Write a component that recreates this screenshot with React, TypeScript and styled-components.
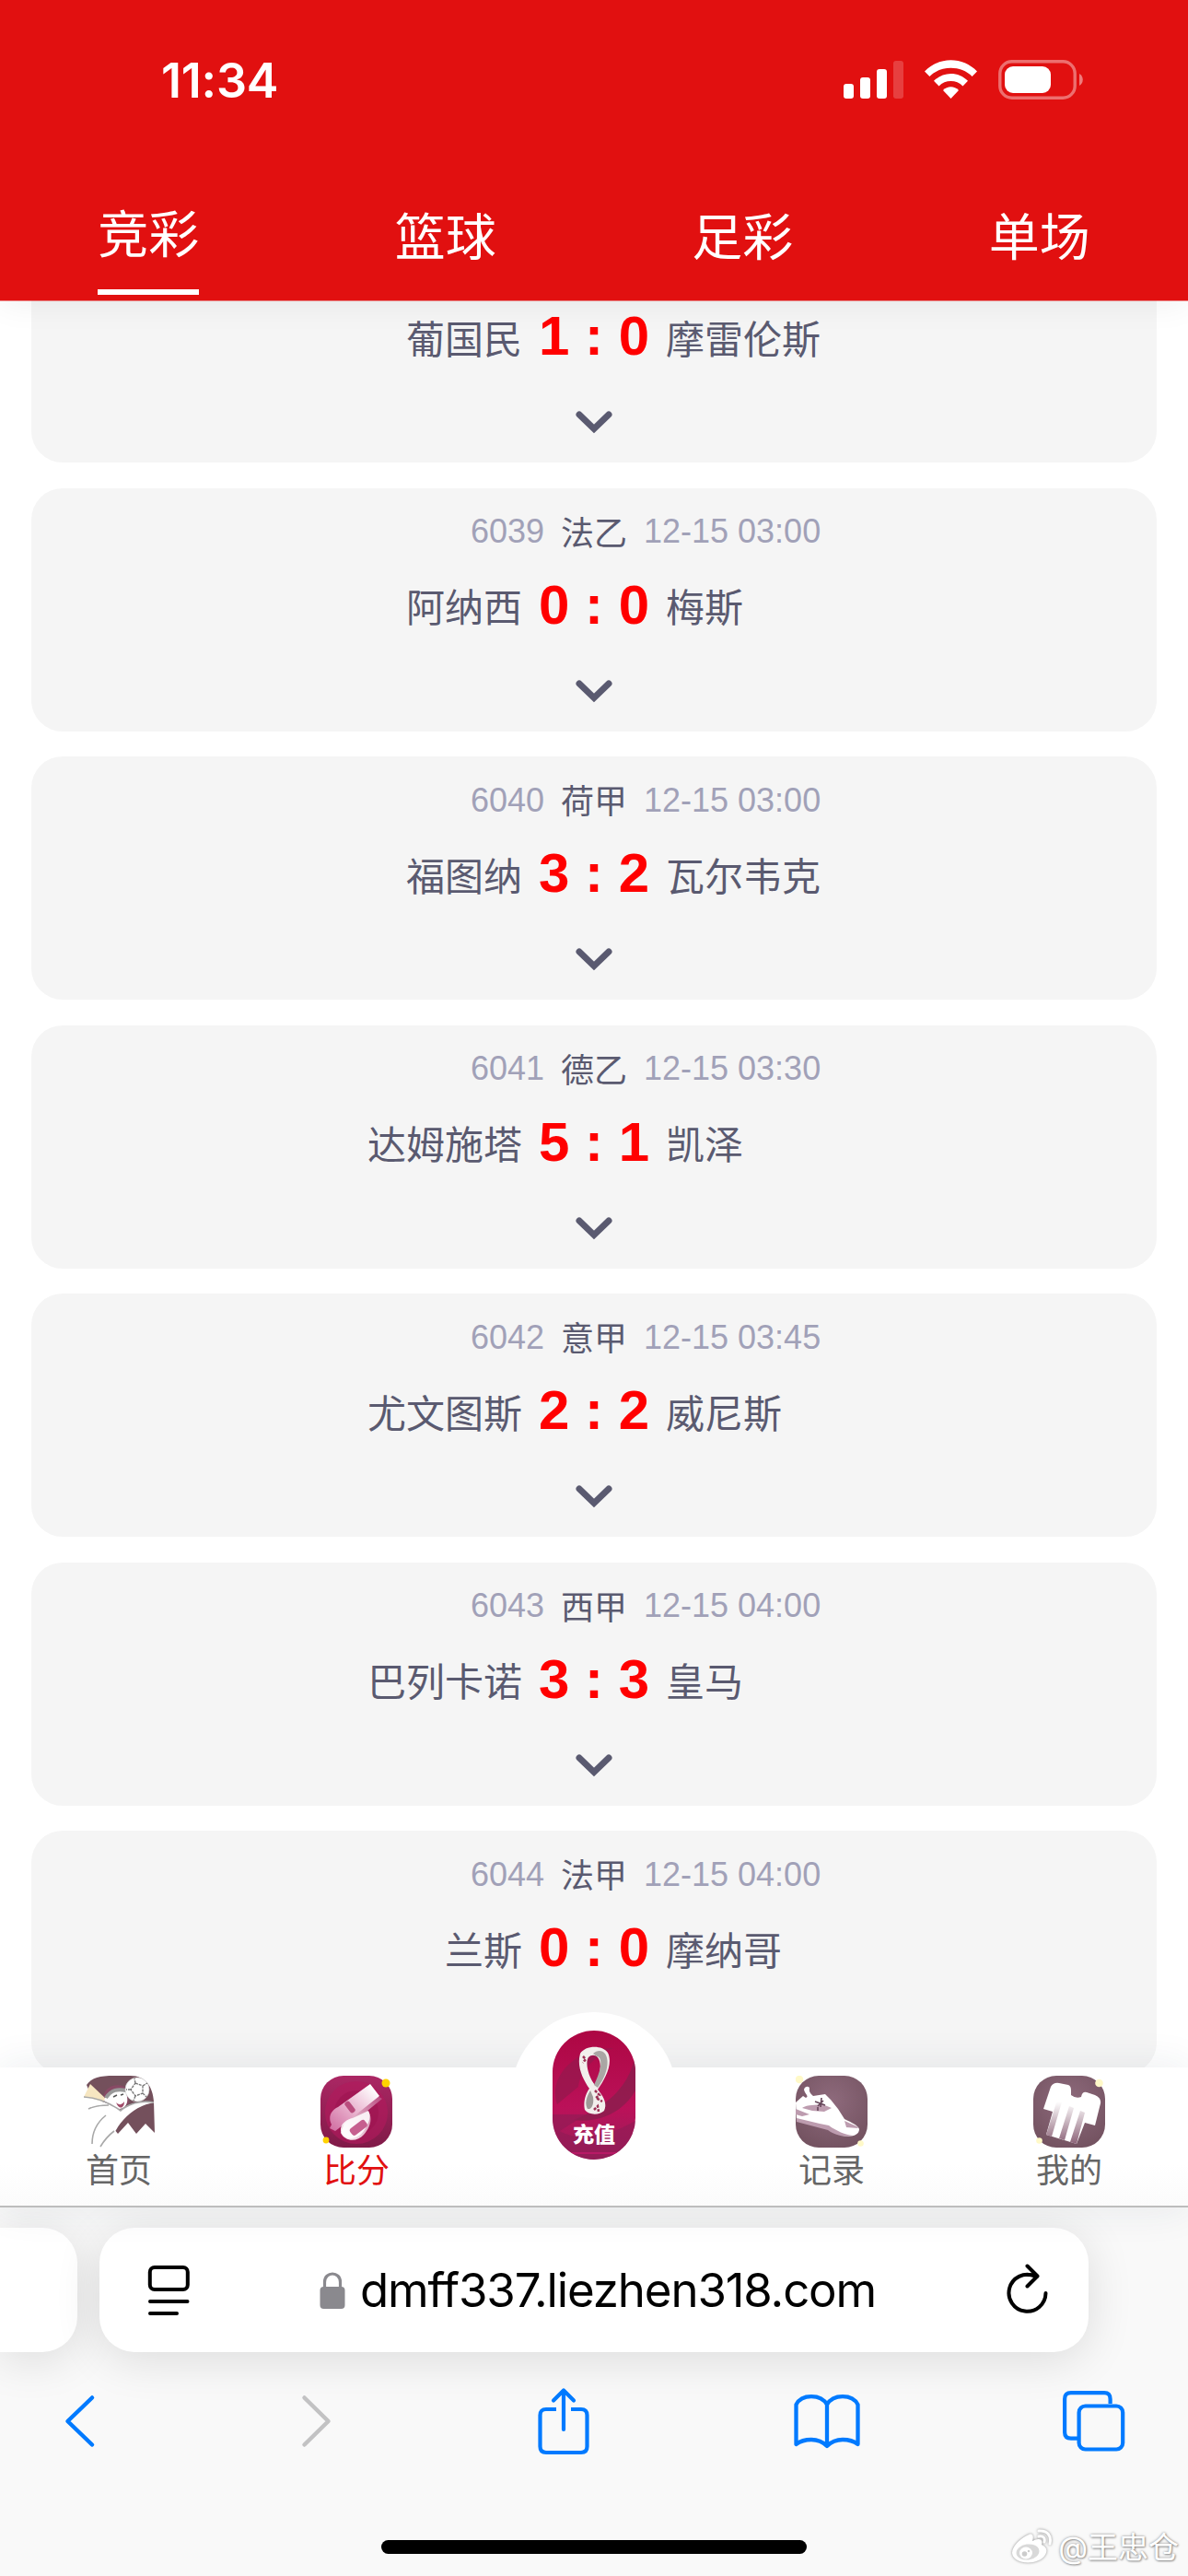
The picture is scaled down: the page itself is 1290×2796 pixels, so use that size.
import React from "react";
import styled, { createGlobalStyle } from "styled-components";

const GlobalStyle = createGlobalStyle`
  * { box-sizing: border-box; }
  body { margin: 0; background: #fff; }
`;

const webFont = `"Liberation Sans", "Noto Sans CJK SC", sans-serif`;
const systemFont = `Inter, "Noto Sans CJK SC", sans-serif`;

const Screen = styled.div`
  width: 1290px;
  height: 2796px;
  display: flex;
  flex-direction: column;
  overflow: hidden;
  background: #fff;
  font-family: ${webFont};
`;

/* ---------- header ---------- */

const Header = styled.header`
  flex: none;
  height: 326px;
  z-index: 2;
  display: flex;
  flex-direction: column;
  background: #e11010;
  box-shadow: 0 1px 0 rgba(225, 16, 16, 0.5), 0 0 36px rgba(0, 0, 0, 0.08);
`;

const StatusBar = styled.div`
  height: 177px;
  padding: 0 112px 0 175px;
  display: flex;
  align-items: flex-start;
  justify-content: space-between;
  color: #fff;
`;

const Clock = styled.div`
  margin-top: 57px;
  line-height: 62px;
  font-family: ${systemFont};
  font-weight: 600;
  font-size: 52px;
  letter-spacing: -0.2px;
`;

const StatusIcons = styled.svg`
  display: block;
  width: 262px;
  height: 44px;
  margin-top: 65px;
`;

const Tabs = styled.nav`
  flex: 1;
  display: grid;
  grid-template-columns: repeat(4, 1fr);
  justify-items: center;
  padding-bottom: 6px;
`;

const Tab = styled.div<{ $active?: boolean }>`
  display: flex;
  align-items: center;
  padding-top: ${(p) => (p.$active ? 9 : 8)}px;
  color: #fff;
  font-size: 55px;
  border-bottom: ${(p) => (p.$active ? "6px solid #fff" : "none")};
`;

/* ---------- match list ---------- */

const ListViewport = styled.main`
  flex: 1;
  min-height: 0;
  overflow: hidden;
  padding: 0 34px;
`;

const List = styled.div`
  display: flex;
  flex-direction: column;
  gap: 27.5px;
  margin-top: -88px;
`;

const Card = styled.article`
  flex: none;
  height: 264px;
  padding-top: 20px;
  display: flex;
  flex-direction: column;
  align-items: center;
  border-radius: 34px;
  background: #f5f5f5;
`;

const Row = styled.div<{ $h: number }>`
  width: 100%;
  height: ${(p) => p.$h}px;
  display: grid;
  grid-template-columns: 1fr auto 1fr;
  column-gap: 18px;
  align-items: center;
  white-space: nowrap;
`;

const Meta = styled.span<{ $right?: boolean }>`
  font-size: 36px;
  padding-top: 3px;
  color: #a1a1b8;
  text-align: ${(p) => (p.$right ? "right" : "left")};
`;

const League = styled.span`
  font-size: 36px;
  color: #5a5a70;
`;

const Team = styled.span<{ $right?: boolean }>`
  font-size: 42px;
  color: #5a5a70;
  text-align: ${(p) => (p.$right ? "right" : "left")};
`;

const Score = styled.strong`
  font-size: 60px;
  line-height: 64px;
  font-weight: 700;
  color: #f00;
`;

const Expand = styled.svg`
  display: block;
  width: 40px;
  height: 28px;
  margin-top: 25px;
`;

/* ---------- app navigation ---------- */

const AppNav = styled.nav`
  flex: none;
  position: relative;
  height: 152px;
  z-index: 2;
  display: grid;
  grid-template-columns: repeat(5, 1fr);
  background: linear-gradient(#fff 70%, #fbfbfb);
  border-bottom: 2px solid #bdbdbd;
  box-shadow: 0 0 42px rgba(30, 55, 80, 0.09);
`;

const NavItem = styled.div<{ $active?: boolean }>`
  display: flex;
  flex-direction: column;
  align-items: center;
  padding-top: 9px;
  font-size: 36px;
  line-height: 50px;
  color: ${(p) => (p.$active ? "#e11010" : "#666")};
`;

const NavIcon = styled.svg`
  display: block;
  width: 78px;
  height: 78px;
  margin-bottom: 1px;
`;

const RechargeBubble = styled.div`
  position: absolute;
  left: 555px;
  top: -60px;
  width: 180px;
  height: 180px;
  border-radius: 50%;
  background: #fff;
  display: flex;
  justify-content: center;
  padding-top: 20px;
`;

const RechargeButton = styled.div`
  position: relative;
  width: 90px;
  height: 140px;
  border-radius: 45px;
  overflow: hidden;
`;

const RechargeArt = styled.svg`
  display: block;
  width: 90px;
  height: 140px;
`;

const RechargeLabel = styled.span`
  position: absolute;
  left: 0;
  right: 0;
  top: 96px;
  text-align: center;
  font-size: 23px;
  line-height: 34px;
  font-weight: 900;
  color: #fff;
`;

/* ---------- browser chrome ---------- */

const Browser = styled.footer`
  flex: none;
  position: relative;
  height: 400px;
  display: flex;
  flex-direction: column;
  background: #f9f9f9;
  font-family: ${systemFont};
`;

const AddressStrip = styled.div`
  display: flex;
  gap: 24px;
  padding-top: 22px;
`;

const PreviousTab = styled.div`
  width: 84px;
  height: 135px;
  border-radius: 0 38px 38px 0;
  background: #fff;
  box-shadow: 0 8px 50px rgba(0, 0, 0, 0.12);
`;

const AddressBar = styled.div`
  width: 1074px;
  height: 135px;
  padding: 0 41px 0 50px;
  display: flex;
  align-items: center;
  justify-content: space-between;
  border-radius: 38px;
  background: #fff;
  box-shadow: 0 8px 50px rgba(0, 0, 0, 0.12);
`;

const Glyph = styled.svg<{ $w: number; $h: number }>`
  display: block;
  flex: none;
  width: ${(p) => p.$w}px;
  height: ${(p) => p.$h}px;
  fill: none;
  stroke-linecap: round;
  stroke-linejoin: round;
`;

const Address = styled.div`
  display: flex;
  align-items: center;
  gap: 16px;
  color: #000;
`;

const Host = styled.span`
  font-size: 51px;
  line-height: 62px;
  letter-spacing: -1.15px;
  white-space: nowrap;
`;

const Toolbar = styled.div`
  display: flex;
  justify-content: space-between;
  align-items: center;
  height: 90px;
  margin-top: 30px;
  padding: 0 66px 0 68px;
  color: #007aff;
`;

const HomeIndicator = styled.div`
  width: 462px;
  height: 15px;
  margin: 84px auto 0;
  border-radius: 8px;
  background: #000;
`;

const Watermark = styled.div`
  position: absolute;
  right: 10px;
  bottom: 7px;
  display: flex;
  align-items: center;
  gap: 4px;
  color: #fff;
  font-size: 33px;
  line-height: 48px;
  text-shadow: 0 0 3px rgba(0, 0, 0, 0.45), 1px 1px 2px rgba(0, 0, 0, 0.3);
`;

/* ---------- drawings ---------- */

const StatusGlyphs = () => (
  <StatusIcons viewBox="0 0 262 44" fill="#fff">
    <rect x="0" y="26" width="11" height="16" rx="3" />
    <rect x="18" y="19" width="11" height="23" rx="3" />
    <rect x="36" y="10" width="11" height="32" rx="3" />
    <rect x="54" y="1" width="11" height="41" rx="3" opacity="0.2" />
    <path d="M88 12.5 C103.5 -3.8 129.500 -3.8 145 12.500 L139.600 18 C127.500 5.800 105.500 5.800 93.400 18 Z" />
    <path d="M98 22.800 C108.200 12.300 124.800 12.300 135 22.800 L129.500 28.500 C122.500 21.300 110.500 21.300 103.500 28.500 Z" />
    <path d="M108 33 C112.800 28 120.200 28 125 33 L116.500 42 Z" />
    <rect x="169.800" y="1.800" width="81.400" height="39.400" rx="13" fill="none" stroke="#fff" strokeWidth="3.400" opacity="0.4" />
    <rect x="175" y="7" width="50" height="29" rx="9" />
    <path d="M256 15 A7.500 7.500 0 0 1 256 28 Z" opacity="0.45" />
  </StatusIcons>
);

const HomeIcon = () => (
  <NavIcon viewBox="0 0 78 78">
    <path d="M4 10 C10 2 18 0 34 0 H52 C68 0 76 12 77 28 L78 62 L68 52 L58 63 L49 51 L38 63 L34 58 C24 46 12 30 4 10 Z" fill="#74505c" />
    <path d="M22 24 C24 8 42 8 48 14 L50 30 L34 40 Z" fill="#884a65" />
    <path d="M8 9 L26 26 L16 31 L1 23 Z" fill="#f6e6c1" />
    <path d="M23 27 C26 18 36 13 46 15 C48 22 50 28 46 33 C42 37 36 37 30 32 Z" fill="#fff" />
    <path d="M25 24 C31 15 38 14 47 16" fill="none" stroke="#999" strokeWidth="4" />
    <path d="M36 29 C39 32 42 32 45 28 C45 36 39 37 36 29 Z" fill="#a04a68" />
    <path d="M33 23 L37 21 M41 21 L44 20" stroke="#555" strokeWidth="1.500" />
    <path d="M0 23 C14 25 26 29 41 37 C50 31 64 26 78 29 C58 32 44 45 36 59 L20 78 H0 Z" fill="#fff" />
    <path d="M1 23 C18 24 30 30 41 38 C49 31 62 26 77 29 M6 36 C14 32 22 32 28 32 M25 43 C15 51 10 62 10 74 M34 60 C26 66 22 72 19 77" fill="none" stroke="#a8a8a8" strokeWidth="1.600" />
    <circle cx="59" cy="15" r="13" fill="#fff" stroke="#ccc" strokeWidth="0.600" />
    <path d="M57 8 L65 11 L65 19 L57 22 L52 15 Z M57 8 L56 3 M65 11 L70 8 M65 19 L69 23 M57 22 L55 27 M52 15 L47 15" fill="none" stroke="#777" strokeWidth="1.400" strokeDasharray="3 1" />
  </NavIcon>
);

const ScoreIcon = () => (
  <NavIcon viewBox="0 0 78 78">
    <defs>
      <linearGradient id="wBg" x1="0" y1="0" x2="0" y2="1">
        <stop offset="0" stopColor="#ab2764" />
        <stop offset="1" stopColor="#801a48" />
      </linearGradient>
      <linearGradient id="wBody" x1="1" y1="0" x2="0" y2="1">
        <stop offset="0.100" stopColor="#fff" />
        <stop offset="0.600" stopColor="#e6a9c8" />
        <stop offset="1" stopColor="#cf6a9f" />
      </linearGradient>
      <linearGradient id="wTube" x1="1" y1="0" x2="0" y2="1">
        <stop offset="0" stopColor="#b9487e" />
        <stop offset="1" stopColor="#fff" />
      </linearGradient>
    </defs>
    <rect width="78" height="78" rx="25" fill="url(#wBg)" />
    <circle cx="39" cy="40" r="34" fill="#b01a5c" opacity="0.650" />
    <circle cx="39" cy="40" r="24" fill="#9d1450" opacity="0.600" />
    <path d="M62 22 L67 25 L51 38 C57 44 55 55 47 64 C40 72 27 72 22 62 L28 46 Z" fill="url(#wTube)" />
    <path d="M54 9 L64 22 L20 57 L16 60 L10 57 L12 53 C8 45 11 38 19 34 Z" fill="url(#wBody)" />
    <path d="M22 60 C21 52 29 47 35 46 L52 38 C55 43 54 50 47 60 C40 70 27 71 22 60 Z" fill="#fff" opacity="0.850" />
    <rect x="29" y="27" width="6" height="14" rx="2.500" transform="rotate(-38 32 34)" fill="#b94d7d" />
    <rect x="31" y="52" width="20" height="9" rx="3" transform="rotate(-37 41 56)" fill="#c65f8f" />
    <circle cx="71" cy="8" r="4.500" fill="#ffd200" />
    <circle cx="6" cy="70" r="3.400" fill="#ffd200" />
  </NavIcon>
);

const MutedTile = ({ id }: { id: string }) => (
  <>
    <defs>
      <radialGradient id={id} cx="0.500" cy="0.350" r="0.700">
        <stop offset="0" stopColor="#8e6a7c" />
        <stop offset="1" stopColor="#735260" />
      </radialGradient>
      <linearGradient id={`${id}Fade`} x1="0" y1="0" x2="0" y2="1">
        <stop offset="0.100" stopColor="#fff" />
        <stop offset="1" stopColor="#8c6378" />
      </linearGradient>
    </defs>
    <rect width="78" height="78" rx="25" fill={`url(#${id})`} />
  </>
);

const RecordIcon = () => (
  <NavIcon viewBox="0 0 78 78">
    <MutedTile id="shoe" />
    <path d="M0 29 L8 22 L11 24 C15 22 10 20 9 15 C10 11 15 11 15 14 C14 18 17 20 19 22 L32 20 L38 26 L46 36 L53 47 C61 51 68 54 69 58 C69 65 60 67 50 65 L36 58 L1 49 Z" fill="#fff" />
    <path d="M7 35 C13 31 22 32 29 31 L39 35 L31 39 L18 38 Z M0 36 L15 42 L7 44 L0 42 Z M53 49 C61 53 67 54 68 57 L55 56 Z M1 46 L26 52 L36 54 C44 60 54 64 62 65 C51 67 42 64 35 59 L1 50 Z" fill="#bd9caf" />
    <path d="M21 28 L32 32 M24 33 L30 27 M28 24 L27 34 M24 34 V38" stroke="#66465a" strokeWidth="1.600" />
    <circle cx="4" cy="4" r="4.300" fill="#fff9c8" />
    <circle cx="70.500" cy="73.500" r="3.300" fill="#fff9c8" />
  </NavIcon>
);

const MineIcon = () => (
  <NavIcon viewBox="0 0 78 78">
    <MutedTile id="shirt" />
    <path d="M19 12 Q22 7 28 8 L38 10 Q41 11 41 16 V21 Q46 25 52 23 Q53 17 58 18 L67 21 Q74 24 73 30 L67 54 L56 51 L47 74 L14 64 L21 39 L11 36 Z" fill="#fff" />
    <path d="M27 23 L32 25 L20 66 L14 64 Z M39 33 L44 35 L34 70 L28 68 Z M51 38 L56 40 L47 74 L40 72 Z" fill="url(#shirtFade)" />
    <circle cx="71.500" cy="8" r="4.300" fill="#fff9c8" />
    <circle cx="6.500" cy="70.500" r="3.300" fill="#fff9c8" />
  </NavIcon>
);

const TrophyArt = () => (
  <RechargeArt viewBox="0 0 90 140">
    <defs>
      <linearGradient id="cupBg" x1="0" y1="0" x2="0" y2="1">
        <stop offset="0" stopColor="#ad0743" />
        <stop offset="0.600" stopColor="#bb1159" />
        <stop offset="1" stopColor="#96205a" />
      </linearGradient>
    </defs>
    <rect width="90" height="140" fill="url(#cupBg)" />
    <path d="M66 19 C28 18 -6 48 5 80 L28 61 C30 42 48 27 66 19 Z" fill="#96184d" opacity="0.750" />
    <path d="M90 22 C87 55 65 80 23 97 C52 101 78 87 90 65 Z" fill="#8c1d4d" opacity="0.850" />
    <path d="M0 91 H36 L8 109 C25 120 57 117 90 98 V140 H0 Z" fill="#931b56" opacity="0.700" />
    <path d="M10 133 H80" stroke="#c3196b" strokeWidth="1.500" />
    <path fillRule="evenodd" d="M30 25 C35 16 54 15 60 24 C66 36 57 53 49 64 C54 70 60 78 56 87 C51 92 39 92 35 86 C33 78 36 68 40 63 C33 53 26 39 30 25 Z M39 29 C35 35 39 50 46 59 C52 49 54 35 49 29 C46 26 42 26 39 29 Z" fill="#f2efec" />
    <path d="M48 28 C55 29 53 43 45 59 L49 62 C58 50 63 34 57 25 C54 21 48 21 44 25 Z" fill="#aaa6a4" />
    <path d="M41 65 C36 73 35 80 38 85 C43 86 45 79 44 72 Z" fill="#9f9a98" />
    <path d="M33 28 L36 31 L33 35 M46 65 L51 70 L47 73 L54 77 M45 86 L49 82 L50 88" stroke="#9b3054" strokeWidth="2.500" strokeDasharray="3 1.500" fill="none" />
  </RechargeArt>
);

const ReaderIcon = () => (
  <Glyph $w={49} $h={58} viewBox="0 0 49 58" stroke="#000" strokeWidth="4">
    <rect x="4.800" y="4" width="41" height="24" rx="5" />
    <path d="M5 41 H45.500 M5 54 H34" />
  </Glyph>
);

const LockIcon = () => (
  <Glyph $w={28} $h={40} viewBox="0 0 28 40">
    <path d="M5.500 18 V11 C5.500 -1 22.500 -1 22.500 11 V18" stroke="#8a898e" strokeWidth="3.200" />
    <rect x="0.500" y="16" width="27" height="24" rx="4" fill="#8a898e" />
  </Glyph>
);

const ReloadIcon = () => (
  <Glyph $w={50} $h={58} viewBox="0 0 50 58" stroke="#000" strokeWidth="4">
    <path d="M44.500 32 A20 20 0 1 1 32 13.200 M24.500 2.500 L35.500 13.500 L24.500 24.500" />
    <path d="M24 12 C29 12 32 12.500 35 13.500" />
  </Glyph>
);

const BackIcon = () => (
  <Glyph $w={38} $h={60} viewBox="0 0 38 60" stroke="#007aff" strokeWidth="4.500">
    <path d="M32 4.500 L5.500 30 L32 55.500" />
  </Glyph>
);

const ForwardIcon = () => (
  <Glyph $w={38} $h={60} viewBox="0 0 38 60" stroke="#c2c2c3" strokeWidth="4.500">
    <path d="M5.500 4.500 L31.500 30 L5.500 55.500" />
  </Glyph>
);

const ShareIcon = () => (
  <Glyph $w={60} $h={76} viewBox="0 0 60 76" stroke="#007aff" strokeWidth="4.200">
    <path strokeLinecap="butt" d="M22 25 H11 Q4.500 25 4.500 31.500 V65.500 Q4.500 72 11 72 H49 Q55.500 72 55.500 65.500 V31.500 Q55.500 25 49 25 H38" />
    <path d="M30 47 V4.500 M19 15.500 L30 4.500 L41 15.500" />
  </Glyph>
);

const BookIcon = () => (
  <Glyph $w={74} $h={62} viewBox="0 0 74 62" stroke="#007aff" strokeWidth="4.300">
    <path d="M3.500 13 Q8 4.200 20 4.200 Q32 4.200 37 13 Q42 4.200 54 4.200 Q66 4.200 70.500 13 V56 Q64 51 54 51 Q44 51 37 58 Q30 51 20 51 Q10 51 3.500 56 Z M37 13 V58" />
  </Glyph>
);

const TabsIcon = () => (
  <Glyph $w={70} $h={68} viewBox="0 0 70 68" stroke="#007aff" strokeWidth="4.200">
    <path strokeLinecap="butt" d="M51.600 15 V10 Q51.600 3.100 45 3.100 H9 Q2.100 3.100 2.100 10 V46 Q2.100 52.600 9 52.600 H16" />
    <rect x="17.600" y="17.500" width="47.600" height="47" rx="7" />
  </Glyph>
);

const WeiboIcon = () => (
  <svg width="48" height="40" viewBox="0 0 48 40" style={{ filter: "drop-shadow(0 0 1.5px rgba(0,0,0,.45))" }}>
    <path d="M18 7 C24 3 26 7 24 13 C31 9 36 11 34 17 C39 19 41 23 38 28 C31 40 3 39 2 26 C2 19 10 11 18 7 Z" fill="#fff" />
    <ellipse cx="19" cy="25" rx="12.500" ry="8.500" fill="#d9d9d9" transform="rotate(-8 19 25)" />
    <ellipse cx="17" cy="26" rx="7" ry="6.500" fill="#fff" />
    <circle cx="15.500" cy="27" r="2.800" fill="#ccc" />
    <circle cx="20" cy="24" r="1.200" fill="#ccc" />
    <path d="M31 2 C40 1 45 7 43 16 M31 8 C36 7 38 10 37 14" fill="none" stroke="#fff" strokeWidth="3" strokeLinecap="round" />
  </svg>
);

/* ---------- data ---------- */

type Match = { no: string; league: string; time: string; home: string; away: string; score: string };

const matches: Match[] = [
  { no: "", league: "", time: "", home: "葡国民", away: "摩雷伦斯", score: "1 : 0" },
  { no: "6039", league: "法乙", time: "12-15 03:00", home: "阿纳西", away: "梅斯", score: "0 : 0" },
  { no: "6040", league: "荷甲", time: "12-15 03:00", home: "福图纳", away: "瓦尔韦克", score: "3 : 2" },
  { no: "6041", league: "德乙", time: "12-15 03:30", home: "达姆施塔", away: "凯泽", score: "5 : 1" },
  { no: "6042", league: "意甲", time: "12-15 03:45", home: "尤文图斯", away: "威尼斯", score: "2 : 2" },
  { no: "6043", league: "西甲", time: "12-15 04:00", home: "巴列卡诺", away: "皇马", score: "3 : 3" },
  { no: "6044", league: "法甲", time: "12-15 04:00", home: "兰斯", away: "摩纳哥", score: "0 : 0" },
];

const MatchCard = ({ match }: { match: Match }) => (
  <Card>
    <Row $h={52}>
      <Meta $right>{match.no}</Meta>
      <League>{match.league}</League>
      <Meta>{match.time}</Meta>
    </Row>
    <Row $h={110}>
      <Team $right>{match.home}</Team>
      <Score>{match.score}</Score>
      <Team>{match.away}</Team>
    </Row>
    <Expand as="svg" viewBox="0 0 40 28" style={undefined}>
      <path d="M4 5 L20 20.500 L36 5" fill="none" stroke="#5a5a70" strokeWidth="7" strokeLinecap="round" />
    </Expand>
  </Card>
);

const App = () => (
  <>
    <GlobalStyle />
    <Screen>
      <Header>
        <StatusBar>
          <Clock>11:34</Clock>
          <StatusGlyphs />
        </StatusBar>
        <Tabs>
          <Tab $active>竞彩</Tab>
          <Tab>篮球</Tab>
          <Tab>足彩</Tab>
          <Tab>单场</Tab>
        </Tabs>
      </Header>

      <ListViewport>
        <List>
          {matches.map((m, i) => (
            <MatchCard key={i} match={m} />
          ))}
        </List>
      </ListViewport>

      <AppNav>
        <NavItem>
          <HomeIcon />
          首页
        </NavItem>
        <NavItem $active>
          <ScoreIcon />
          比分
        </NavItem>
        <RechargeBubble>
          <RechargeButton>
            <TrophyArt />
            <RechargeLabel>充值</RechargeLabel>
          </RechargeButton>
        </RechargeBubble>
        <span />
        <NavItem>
          <RecordIcon />
          记录
        </NavItem>
        <NavItem>
          <MineIcon />
          我的
        </NavItem>
      </AppNav>

      <Browser>
        <AddressStrip>
          <PreviousTab />
          <AddressBar>
            <ReaderIcon />
            <Address>
              <LockIcon />
              <Host>dmff337.liezhen318.com</Host>
            </Address>
            <ReloadIcon />
          </AddressBar>
        </AddressStrip>
        <Toolbar>
          <BackIcon />
          <ForwardIcon />
          <ShareIcon />
          <BookIcon />
          <TabsIcon />
        </Toolbar>
        <HomeIndicator />
        <Watermark>
          <WeiboIcon />
          @王忠仓
        </Watermark>
      </Browser>
    </Screen>
  </>
);

export default App;
